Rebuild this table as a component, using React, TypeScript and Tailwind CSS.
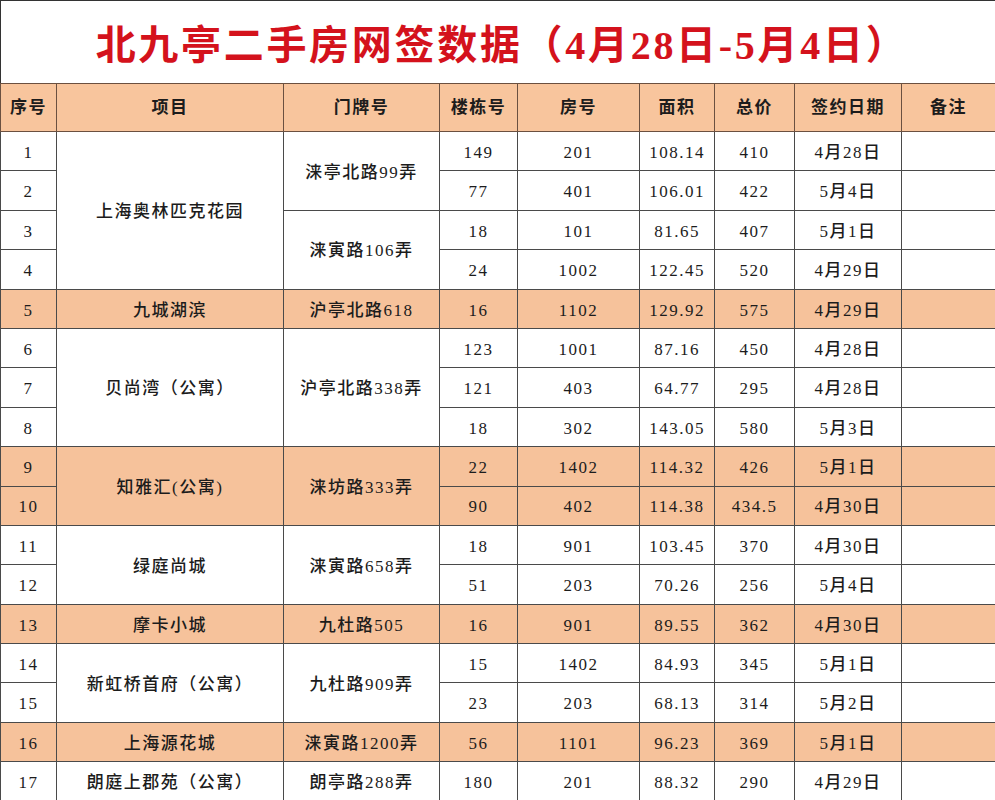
import React from "react";

type Row = {
  no: number;
  proj?: { text: string; span: number };
  addr?: { text: string; span: number };
  bld: string;
  room: string;
  area: string;
  price: string;
  date: string;
  hl?: boolean;
};

const rows: Row[] = [
  { no: 1, proj: { text: "上海奥林匹克花园", span: 4 }, addr: { text: "涞亭北路99弄", span: 2 }, bld: "149", room: "201", area: "108.14", price: "410", date: "4月28日" },
  { no: 2, bld: "77", room: "401", area: "106.01", price: "422", date: "5月4日" },
  { no: 3, addr: { text: "涞寅路106弄", span: 2 }, bld: "18", room: "101", area: "81.65", price: "407", date: "5月1日" },
  { no: 4, bld: "24", room: "1002", area: "122.45", price: "520", date: "4月29日" },
  { no: 5, hl: true, proj: { text: "九城湖滨", span: 1 }, addr: { text: "沪亭北路618", span: 1 }, bld: "16", room: "1102", area: "129.92", price: "575", date: "4月29日" },
  { no: 6, proj: { text: "贝尚湾（公寓）", span: 3 }, addr: { text: "沪亭北路338弄", span: 3 }, bld: "123", room: "1001", area: "87.16", price: "450", date: "4月28日" },
  { no: 7, bld: "121", room: "403", area: "64.77", price: "295", date: "4月28日" },
  { no: 8, bld: "18", room: "302", area: "143.05", price: "580", date: "5月3日" },
  { no: 9, hl: true, proj: { text: "知雅汇(公寓)", span: 2 }, addr: { text: "涞坊路333弄", span: 2 }, bld: "22", room: "1402", area: "114.32", price: "426", date: "5月1日" },
  { no: 10, hl: true, bld: "90", room: "402", area: "114.38", price: "434.5", date: "4月30日" },
  { no: 11, proj: { text: "绿庭尚城", span: 2 }, addr: { text: "涞寅路658弄", span: 2 }, bld: "18", room: "901", area: "103.45", price: "370", date: "4月30日" },
  { no: 12, bld: "51", room: "203", area: "70.26", price: "256", date: "5月4日" },
  { no: 13, hl: true, proj: { text: "摩卡小城", span: 1 }, addr: { text: "九杜路505", span: 1 }, bld: "16", room: "901", area: "89.55", price: "362", date: "4月30日" },
  { no: 14, proj: { text: "新虹桥首府（公寓）", span: 2 }, addr: { text: "九杜路909弄", span: 2 }, bld: "15", room: "1402", area: "84.93", price: "345", date: "5月1日" },
  { no: 15, bld: "23", room: "203", area: "68.13", price: "314", date: "5月2日" },
  { no: 16, hl: true, proj: { text: "上海源花城", span: 1 }, addr: { text: "涞寅路1200弄", span: 1 }, bld: "56", room: "1101", area: "96.23", price: "369", date: "5月1日" },
  { no: 17, proj: { text: "朗庭上郡苑（公寓）", span: 1 }, addr: { text: "朗亭路288弄", span: 1 }, bld: "180", room: "201", area: "88.32", price: "290", date: "4月29日" },
];

const widths = [56, 227, 156, 78, 122, 75, 80, 107, 94];
const headers = ["序号", "项目", "门牌号", "楼栋号", "房号", "面积", "总价", "签约日期", "备注"];

const td = "border border-[#4a4a4a] text-center align-middle p-0 pt-[3px]";

export default function App() {
  return (
    <div
      className="w-[995px] h-[800px] overflow-hidden bg-white text-[#1c1c1c]"
      style={{ fontFamily: '"Liberation Serif", "Noto Sans CJK SC", serif' }}
    >
      <div className="h-[83px] flex items-center justify-center pl-[8px] pt-[7px] border-l border-t border-[#333]">
        <h1 className="text-[40px] font-semibold text-[#d4121c] tracking-[2.7px] leading-none">
          北九亭二手房网签数据（4月28日-5月4日）
        </h1>
      </div>
      <table className="border-collapse table-fixed w-[995px] text-[17px] tracking-[1.5px] font-medium">
        <colgroup>
          {widths.map((w, i) => (
            <col key={i} style={{ width: w }} />
          ))}
        </colgroup>
        <thead>
          <tr className="h-[48px] bg-[#f8c59d]">
            {headers.map((h) => (
              <th key={h} className="border border-[#6b5040] text-center align-middle font-bold text-[17px] p-0">
                {h}
              </th>
            ))}
          </tr>
        </thead>
        <tbody>
          {rows.map((r) => {
            const bg = r.hl ? "bg-[#f6c29b]" : "bg-white";
            return (
              <tr key={r.no} className={`h-[39.4px] ${bg}`}>
                <td className={td}>{r.no}</td>
                {r.proj && (
                  <td className={td} rowSpan={r.proj.span}>
                    {r.proj.text}
                  </td>
                )}
                {r.addr && (
                  <td className={td} rowSpan={r.addr.span}>
                    {r.addr.text}
                  </td>
                )}
                <td className={td}>{r.bld}</td>
                <td className={td}>{r.room}</td>
                <td className={td}>{r.area}</td>
                <td className={td}>{r.price}</td>
                <td className={td}>{r.date}</td>
                <td className={td}></td>
              </tr>
            );
          })}
        </tbody>
      </table>
    </div>
  );
}
